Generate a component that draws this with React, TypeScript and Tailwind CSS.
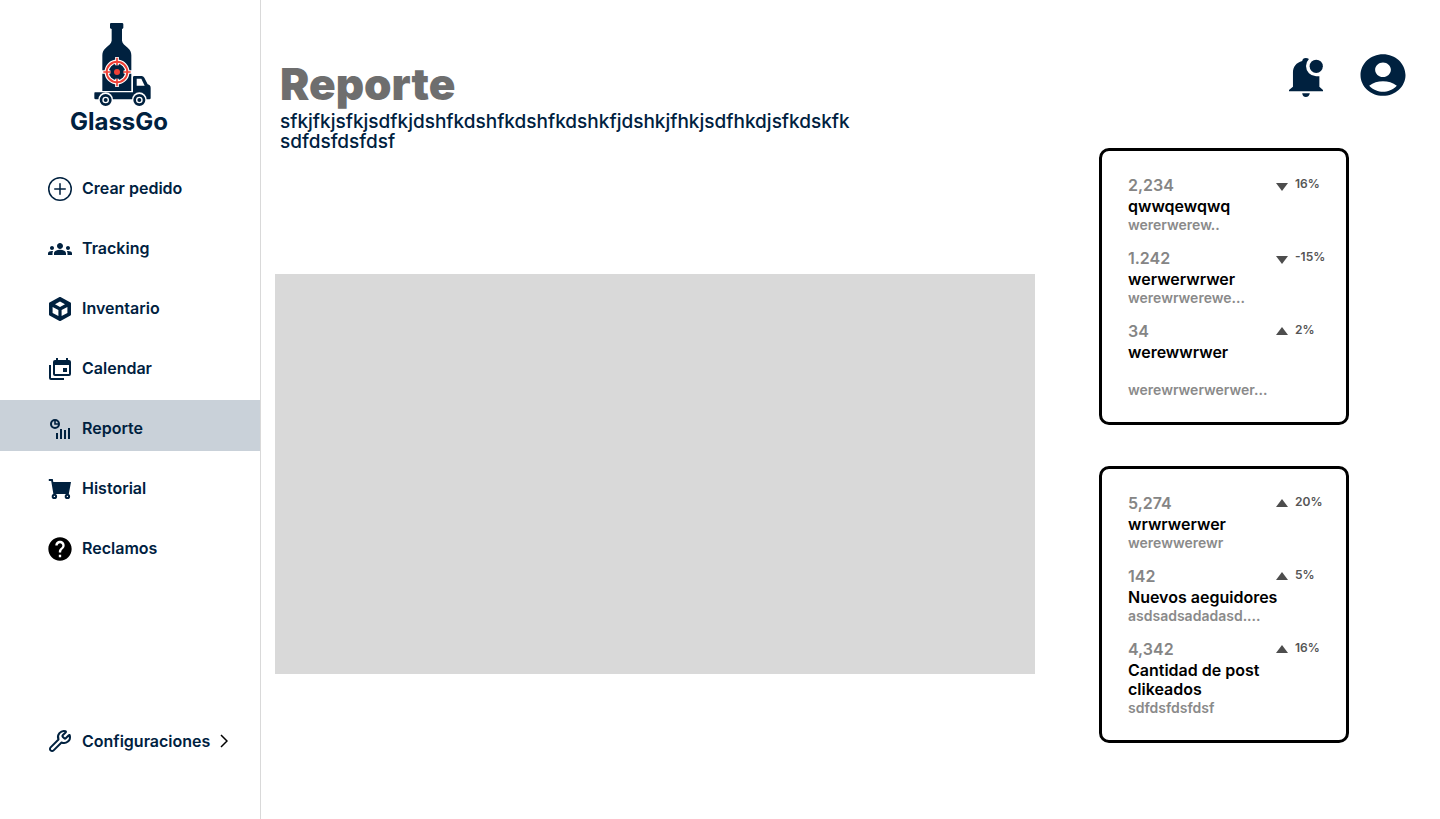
import type { ReactNode } from 'react';
import { BsPlusCircle } from 'react-icons/bs';
import { MdAccountCircle, MdGroups, MdHelp } from 'react-icons/md';
import { Wrench } from 'lucide-react';

function Logo() {
  return (
    <svg viewBox="100 36 177 255" className="h-[85px] w-[59px]" aria-hidden="true">
      <g fill="#00213f">
        <path d="M154 39h33q4 0 4 4v10q0 3-4 4v35c1 9 9 14 17 21 8 7 11 13 11 23v107h-87V136c0-10 3-16 11-23 8-7 16-12 17-21V57q-5-1-5-4V43q0-4 3-4z" />
        <path d="M106 247h114v-45q0-4 4-4h22q5 0 8 5l10 20q9 2 9 11v30q0 4-4 4H108q-4 0-4-4v-13q0-4 2-4z" />
      </g>
      <path d="M104 244.500h114V200" fill="none" stroke="#fff" strokeWidth="3" />
      <path d="M231 206h14l10 21h-24z" fill="#fff" />
      <g fill="#fff">
        <circle cx="138" cy="269" r="22" />
        <circle cx="239" cy="269" r="22" />
      </g>
      <g fill="#fff" stroke="#00213f" strokeWidth="8">
        <circle cx="138" cy="270" r="14" />
        <circle cx="239" cy="270" r="14" />
      </g>
      <circle cx="138" cy="270" r="6" fill="#00213f" />
      <circle cx="239" cy="270" r="6" fill="#00213f" />
      <g fill="none" stroke="#fff">
        <circle cx="172" cy="186" r="31" strokeWidth="13" />
        <path d="M172 141v25M172 206v25M127 186h25M192 186h25" strokeWidth="11" />
      </g>
      <circle cx="172" cy="186" r="31" fill="none" stroke="#ee4036" strokeWidth="6" />
      <path d="M172 143v22M172 207v22M131 186h22M191 186h22" stroke="#ee4036" strokeWidth="5" />
      <circle cx="172" cy="186" r="9" fill="#ee4036" />
    </svg>
  );
}

function BoxIcon() {
  return (
    <svg viewBox="0 0 24 24" className="size-6" aria-hidden="true">
      <path d="M12 1 22 6.500v11L12 23 2 17.500v-11z" fill="#00213f" stroke="#00213f" strokeWidth="2" strokeLinejoin="round" />
      <path d="M12 4.600 17 7.300 12 10 7 7.300zM4.600 9.900l5.800 3.100v6L4.600 15.900zM19.400 9.900l-5.800 3.100v6l5.800-3.100z" fill="#fff" />
    </svg>
  );
}

function CalendarIcon() {
  return (
    <svg viewBox="0 0 24 24" className="size-6" fill="#00213f" aria-hidden="true">
      <path d="M1 8h2v13h13v2H3a2 2 0 0 1-2-2z" />
      <path fillRule="evenodd" d="M8 1h2v2h8V1h2v2h1a2 2 0 0 1 2 2v12a2 2 0 0 1-2 2H7a2 2 0 0 1-2-2V5a2 2 0 0 1 2-2h1zM7 8v9h14V8z" />
      <path d="M15 11h4v4h-4z" />
    </svg>
  );
}

function ReportIcon() {
  return (
    <svg viewBox="0 0 24 24" className="size-6" aria-hidden="true">
      <circle cx="7" cy="7" r="4" fill="none" stroke="#00213f" strokeWidth="2" />
      <path d="M7 3v4h4" fill="none" stroke="#00213f" strokeWidth="1.600" />
      <path d="M9 16v6M13 12v10M17 13v9M21 11v11" stroke="#00213f" strokeWidth="2" />
    </svg>
  );
}

function CartIcon() {
  return (
    <svg viewBox="0 0 24 24" className="size-6" aria-hidden="true">
      <path d="M.8 2h4l.5 3H23L20.800 17H5.400L3.200 4H.8z" fill="#00213f" />
      <circle cx="6.400" cy="19.400" r="1.700" fill="#fff" stroke="#00213f" strokeWidth="2" />
      <circle cx="19.400" cy="19.400" r="1.700" fill="#fff" stroke="#00213f" strokeWidth="2" />
    </svg>
  );
}

function BellIcon() {
  return (
    <svg viewBox="55 53 103 118" className="h-[39px] w-[34px]" aria-hidden="true">
      <path d="M55 150l12-10V97c0-18 10-30 28-35 1-6 4-9 11-9s11 3 12 9c16 4 29 16 29 35v43l11 10v4H55z" fill="#00213f" />
      <path d="M95 160h23q-2 11-12 11t-11-11z" fill="#00213f" />
      <path d="M137 47h40v61h-40a30.500 30.500 0 0 1 0-61z" fill="#fff" />
      <circle cx="137.500" cy="78" r="20" fill="#00213f" />
    </svg>
  );
}

type NavItem = { label: string; icon: ReactNode; active?: boolean };

const navItems: NavItem[] = [
  { label: 'Crear pedido', icon: <BsPlusCircle className="size-6" /> },
  { label: 'Tracking', icon: <MdGroups className="size-6" /> },
  { label: 'Inventario', icon: <BoxIcon /> },
  { label: 'Calendar', icon: <CalendarIcon /> },
  { label: 'Reporte', icon: <ReportIcon />, active: true },
  { label: 'Historial', icon: <CartIcon /> },
  { label: 'Reclamos', icon: <MdHelp className="-mx-0.5 size-7 text-black" /> },
];

type Stat = { value: string; title: string; note: string; change: string; up: boolean; spaced?: boolean };

const cards: Stat[][] = [
  [
    { value: '2,234', title: 'qwwqewqwq', note: 'wererwerew..', change: '16%', up: false },
    { value: '1.242', title: 'werwerwrwer', note: 'werewrwerewe...', change: '-15%', up: false },
    { value: '34', title: 'werewwrwer', note: 'werewrwerwerwer...', change: '2%', up: true, spaced: true },
  ],
  [
    { value: '5,274', title: 'wrwrwerwer', note: 'werewwerewr', change: '20%', up: true },
    { value: '142', title: 'Nuevos aeguidores', note: 'asdsadsadadasd....', change: '5%', up: true },
    { value: '4,342', title: 'Cantidad de post clikeados', note: 'sdfdsfdsfdsf', change: '16%', up: true },
  ],
];

function StatCard({ stats }: { stats: Stat[] }) {
  return (
    <section className="flex w-[250px] flex-col gap-[15px] rounded-[10px] border-3 border-black pt-[25px] pr-[17px] pb-[23px] pl-[26px] font-semibold">
      {stats.map((stat) => (
        <div key={stat.title}>
          <div className="flex items-start justify-between pb-0.5">
            <span className="text-base leading-[19px] text-[#858585]">{stat.value}</span>
            <span className="flex w-[53px] items-center gap-[7px] text-xs leading-4 text-[#555]">
              <svg viewBox="0 0 12 10" className="mt-1 h-[10px] w-3" fill="#4d4d4d" aria-hidden="true">
                <path d={stat.up ? 'M6 0l6 8H0z' : 'M0 2h12L6 10z'} />
              </svg>
              {stat.change}
            </span>
          </div>
          <h2 className={stat.spaced ? 'mb-[19px] text-base leading-[19px] text-black' : 'text-base leading-[19px] text-black'}>{stat.title}</h2>
          <p className="text-sm leading-[18px] text-[#8a8a8a]">{stat.note}</p>
        </div>
      ))}
    </section>
  );
}

export default function App() {
  return (
    <div className="flex min-h-screen bg-white font-['Inter',sans-serif] text-[#00213f]">
      <aside className="flex w-[261px] shrink-0 flex-col border-r border-[#d9d9d9] pt-[22px] pb-[66px]">
        <a href="#inicio" className="flex flex-col items-center pr-[22px]">
          <span className="pl-1.5"><Logo /></span>
          <span className="text-2xl leading-[30px] font-bold">GlassGo</span>
        </a>
        <nav className="mt-[23px] flex flex-col gap-[9px]">
          {navItems.map((item) => (
            <a
              key={item.label}
              href={`#${item.label.toLowerCase().replace(' ', '-')}`}
              aria-current={item.active ? 'page' : undefined}
              className={
                item.active
                  ? 'flex h-[51px] items-center gap-[10px] bg-[#c9d1d9] pt-[7px] pl-12 font-semibold'
                  : 'flex h-[51px] items-center gap-[10px] pt-[7px] pl-12 font-semibold'
              }
            >
              {item.icon}
              <span className="pb-0.5">{item.label}</span>
            </a>
          ))}
        </nav>
        <a href="#configuraciones" className="mt-auto flex items-center gap-[10px] pl-12 font-semibold">
          <Wrench className="size-6" />
          Configuraciones
          <svg viewBox="0 0 8 14" className="h-[14px] w-2" fill="none" stroke="#000" strokeWidth="1.500" aria-hidden="true">
            <path d="M1 1l6 6-6 6" />
          </svg>
        </a>
      </aside>
      <main className="flex flex-1 items-start gap-16 pr-[35px] pl-[14px]">
        <div className="flex-1 pt-[58px]">
          <header className="pl-[5px]">
            <h1 className="pb-0.5 text-[44px] leading-[52px] font-black text-[#6e6e6e]">Reporte</h1>
            <p className="max-w-[600px] text-[19px] leading-5 font-medium">
              sfkjfkjsfkjsdfkjdshfkdshfkdshfkdshkfjdshkjfhkjsdfhkdjsfkdskfk sdfdsfdsfdsf
            </p>
          </header>
          <div className="mt-[122px] h-[400px] bg-[#d9d9d9]" />
        </div>
        <div className="w-[306px] pt-[50px]">
          <div className="flex items-center justify-end gap-[33px]">
            <button type="button" aria-label="Notificaciones" className="pt-1">
              <BellIcon />
            </button>
            <button type="button" aria-label="Cuenta" className="-mr-[5px]">
              <MdAccountCircle className="h-[50px] w-[54px]" preserveAspectRatio="none" />
            </button>
          </div>
          <div className="mt-12 flex flex-col gap-[41px]">
            {cards.map((stats) => (
              <StatCard key={stats[0].value} stats={stats} />
            ))}
          </div>
        </div>
      </main>
    </div>
  );
}
